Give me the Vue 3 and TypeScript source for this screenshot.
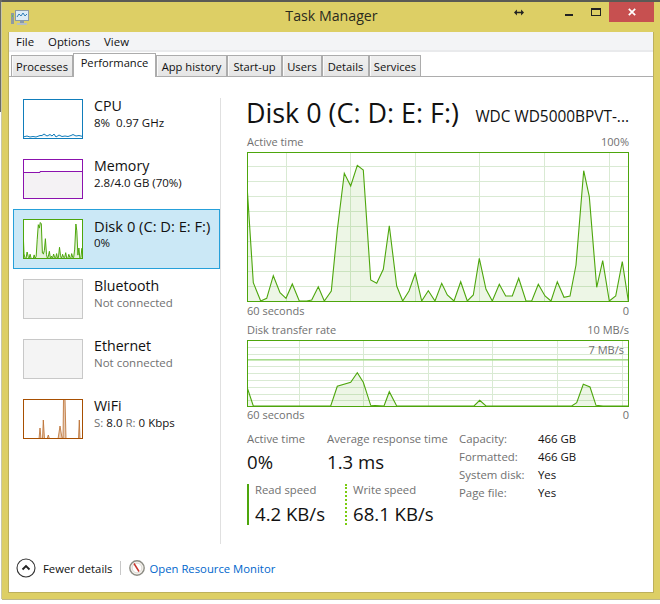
<script setup lang="ts">
type P = [number, number]
const d1: P[] = [[247,185],[253.3,282.7],[260.7,301],[266.7,298.3],[273.3,275.7],[280,292.7],[286,298.3],[292.3,284],[299.3,301],[306.7,301],[311.7,300],[318.3,286.7],[324.3,301],[331.3,291],[337.3,230],[344.3,173.3],[350.7,186],[357.3,165.3],[363.3,170],[370.7,280],[376.7,283.3],[383.3,269.3],[389.3,225.7],[396.7,286],[402.7,301],[409,291],[415.3,273.3],[421.7,301],[428.3,290.7],[435,301],[441.7,283.3],[447.3,295],[454,301],[460.7,281.7],[467.3,301],[473.3,295],[479.3,258.3],[486,289.3],[492.3,301],[499.3,284.3],[505.7,296],[512.3,296],[518.7,278.3],[526,301],[531.7,301],[538.3,284.3],[545,296],[551,301],[557.3,281.7],[564,297.3],[570,296],[576,265],[583.7,170.7],[589.3,196.7],[596.7,287.3],[602.7,260.7],[609.3,301],[615.7,296],[622.3,261.7],[628.3,301]]
const d2: P[] = [[247,386],[253.3,405],[330.7,405],[337.3,385.3],[350.7,381.3],[357.3,371.7],[363.3,381.3],[370.7,404.3],[384,405],[389.3,390.7],[396.7,405],[474,405],[479.7,399.3],[486,405],[571.7,405],[576.7,401.7],[583.3,383.3],[590,386],[596,404.3],[603,405],[628,405]]
const line = (pts: P[], ox: number, oy: number, sx = 1, sy = 1) =>
  pts.map(([x, y]) => `${((x - ox) * sx).toFixed(1)},${((y - oy) * sy).toFixed(1)}`).join(' ')
const area = (pts: P[], ox: number, oy: number, w: number, h: number, sx = 1, sy = 1) =>
  `0,${h} ${line(pts, ox, oy, sx, sy)} ${w},${h}`
const line1 = line(d1, 247, 152)
const area1 = area(d1, 247, 152, 382, 150)
const line2 = line(d2, 247, 339)
const area2 = area(d2, 247, 339, 382, 67)
const diskLine = line(d1, 247, 152, 60 / 382, 40 / 150)
const diskArea = area(d1, 247, 152, 60, 40, 60 / 382, 40 / 150)
const h1 = [14.5, 29.5, 44.5, 59.5, 74.5, 89.5, 104.5, 119.5, 134.5]
const v1 = [39.5, 103.5, 168.5, 232.5, 297.5, 362.5]
const h2 = [7.5, 14.5, 26.5, 33.5, 40.5, 47.5, 54.5, 60.5]
const v2 = [52.5, 116.5, 181.5, 245.5, 310.5, 375.5]
const tabs = [
  { t: 'Processes', w: 62 }, { t: 'Performance', w: 83, on: true }, { t: 'App history', w: 71 },
  { t: 'Start-up', w: 55 }, { t: 'Users', w: 40 }, { t: 'Details', w: 47 }, { t: 'Services', w: 52 }
]
const cpu = '0,38 4,37 7,38 10,37.5 13,38 17,36.5 19,36.5 21,35 24,37 27,35.5 29,37 31,35 33,38 36,36 39,37.5 42,37 45,37.5 48,36.5 50,35.5 53,37 56,36.5 60,37.5'
const wifi = ['16,40 17,29 18,40', '19.5,40 20.3,21 21.5,40', '24,40 25.3,36 26.5,40', '35,40 37,27 38.5,36 39.5,40', '40,40 40.5,0 42,0 43,40', '55.5,40 56.3,21 57,40']
</script>

<template>
  <div class="page">
    <div class="edge-top"></div>
    <div class="edge-left"></div>
    <div class="window">
      <div class="titlebar">
        <svg class="app-icon" width="18" height="16" viewBox="0 0 18 16">
          <rect x="4.5" y="0.5" width="13" height="10" fill="#DCEBF5" stroke="#8A9AA6" />
          <polyline points="6,7 8,4 10,6 12,3 14,6 16,4" fill="none" stroke="#2F7FB8" />
          <rect x="0" y="3" width="3" height="11" fill="#8F9AA0" />
          <rect x="1" y="5" width="1" height="2" fill="#5FC060" />
          <rect x="9" y="11" width="4" height="2" fill="#8A9AA6" />
          <rect x="6" y="13" width="10" height="2" fill="#B4BEC4" />
        </svg>
        <div class="title">Task Manager</div>
        <svg class="cursor" width="10" height="7" viewBox="0 0 12 8">
          <path d="M0 4 L3.5 0.5 V3 H8.5 V0.5 L12 4 L8.5 7.5 V5 H3.5 V7.5 Z" fill="#222" />
        </svg>
        <div class="min"></div>
        <div class="max"></div>
        <div class="close">
          <svg width="8" height="8" viewBox="0 0 8 8">
            <path d="M0.8 0.8 L7.2 7.2 M7.2 0.8 L0.8 7.2" stroke="#fff" stroke-width="1.7" fill="none" />
          </svg>
        </div>
      </div>

      <div class="client">
        <div class="menu">
          <span>File</span><span>Options</span><span>View</span>
        </div>
        <div class="tabs">
          <div v-for="tab in tabs" :key="tab.t" class="tab" :class="{ on: tab.on }" :style="{ width: tab.w + 'px' }">{{ tab.t }}</div>
        </div>

        <div class="body">
          <div class="side">
            <div class="item">
              <svg class="thumb" width="60" height="40" viewBox="0 0 60 40">
                <polyline :points="cpu" fill="#E9F4FA" stroke="#117DBB" />
                <rect x="0.5" y="0.5" width="59" height="39" fill="none" stroke="#117DBB" />
              </svg>
              <div class="meta"><div class="name">CPU</div><div class="sub">8%&nbsp; 0.97 GHz</div></div>
            </div>
            <div class="item">
              <svg class="thumb" width="60" height="40" viewBox="0 0 60 40">
                <path d="M0 13 H17 V12.5 H60 V40 H0 Z" fill="#F4F2F4" />
                <path d="M0 13.5 H17 V12.5 H60" fill="none" stroke="#8B12AE" />
                <rect x="0.5" y="0.5" width="59" height="39" fill="none" stroke="#8B12AE" />
              </svg>
              <div class="meta"><div class="name">Memory</div><div class="sub">2.8/4.0 GB (70%)</div></div>
            </div>
            <div class="item sel">
              <svg class="thumb" width="60" height="40" viewBox="0 0 60 40">
                <rect width="60" height="40" fill="#fff" />
                <polygon :points="diskArea" fill="#E4F1D9" />
                <polyline :points="diskLine" fill="none" stroke="#4DA60C" />
                <rect x="0.5" y="0.5" width="59" height="39" fill="none" stroke="#4DA60C" />
              </svg>
              <div class="meta"><div class="name disk">Disk 0 (C: D: E: F:)</div><div class="sub">0%</div></div>
            </div>
            <div class="item">
              <div class="thumb off"></div>
              <div class="meta"><div class="name">Bluetooth</div><div class="sub gray">Not connected</div></div>
            </div>
            <div class="item">
              <div class="thumb off"></div>
              <div class="meta"><div class="name">Ethernet</div><div class="sub gray">Not connected</div></div>
            </div>
            <div class="item">
              <svg class="thumb" width="60" height="40" viewBox="0 0 60 40">
                <polygon v-for="(p, i) in wifi" :key="i" :points="p" fill="#E8CDB6" stroke="#B96A2A" stroke-width="0.8" />
                <rect x="0.5" y="0.5" width="59" height="39" fill="none" stroke="#A74F01" />
              </svg>
              <div class="meta"><div class="name">WiFi</div><div class="sub"><span class="gray">S:</span> 8.0 <span class="gray">R:</span> 0 Kbps</div></div>
            </div>
          </div>
          <div class="sep"></div>

          <div class="main">
            <div class="head">
              <div class="h-title">Disk 0 (C: D: E: F:)</div>
              <div class="h-model">WDC WD5000BPVT-...</div>
            </div>
            <div class="cap first"><span>Active time</span><span>100%</span></div>
            <svg class="chart" width="382" height="150" viewBox="0 0 382 150">
              <g stroke="#D9EAD3" fill="none">
                <path v-for="y in h1" :key="'a' + y" :d="`M0 ${y} H382`" />
                <path v-for="x in v1" :key="'b' + x" :d="`M${x} 0 V150`" />
              </g>
              <polygon :points="area1" fill="#4DA60C" fill-opacity="0.1" />
              <polyline :points="line1" fill="none" stroke="#4DA60C" stroke-width="1.1" />
              <rect x="0.5" y="0.5" width="381" height="149" fill="none" stroke="#4DA60C" />
            </svg>
            <div class="cap axis"><span>60 seconds</span><span>0</span></div>
            <div class="cap second"><span>Disk transfer rate</span><span>10 MB/s</span></div>
            <div class="chart-wrap">
              <svg class="chart" width="382" height="67" viewBox="0 0 382 67">
                <g stroke="#D9EAD3" fill="none">
                  <path v-for="y in h2" :key="'c' + y" :d="`M0 ${y} H382`" />
                  <path v-for="x in v2" :key="'e' + x" :d="`M${x} 0 V67`" />
                </g>
                <rect x="0" y="19" width="382" height="1.6" fill="#A8DC8E" />
                <polygon :points="area2" fill="#4DA60C" fill-opacity="0.1" />
                <polyline :points="line2" fill="none" stroke="#4DA60C" stroke-width="1.1" />
                <rect x="0.5" y="0.5" width="381" height="66" fill="none" stroke="#4DA60C" />
              </svg>
              <div class="limit">7 MB/s</div>
            </div>
            <div class="cap axis low"><span>60 seconds</span><span>0</span></div>

            <div class="stats">
              <div class="left">
                <div class="row">
                  <div class="st w80"><div class="lab">Active time</div><div class="val">0%</div></div>
                  <div class="st"><div class="lab">Average response time</div><div class="val">1.3 ms</div></div>
                </div>
                <div class="row speeds">
                  <div class="st speed read"><div class="lab">Read speed</div><div class="val">4.2 KB/s</div></div>
                  <div class="st speed write"><div class="lab">Write speed</div><div class="val">68.1 KB/s</div></div>
                </div>
              </div>
              <div class="info">
                <span class="k">Capacity:</span><span>466 GB</span>
                <span class="k">Formatted:</span><span>466 GB</span>
                <span class="k">System disk:</span><span>Yes</span>
                <span class="k">Page file:</span><span>Yes</span>
              </div>
            </div>
          </div>
        </div>

        <div class="footer">
          <svg width="20" height="20" viewBox="0 0 20 20">
            <circle cx="10" cy="10" r="9" fill="#fff" stroke="#333" stroke-width="1.1" />
            <path d="M6.5 11.5 L10 8 L13.5 11.5" fill="none" stroke="#222" stroke-width="1.8" />
          </svg>
          <span class="fewer">Fewer details</span>
          <span class="fsep"></span>
          <svg width="16" height="16" viewBox="0 0 16 16">
            <circle cx="8" cy="8" r="7.2" fill="#F4F1EC" stroke="#8C8C84" stroke-width="1.4" />
            <circle cx="8" cy="8" r="4.8" fill="#fff" stroke="#C9C5BC" stroke-width="0.6" />
            <path d="M5 3.5 L10 11.5" stroke="#C8342B" stroke-width="1.5" />
          </svg>
          <span class="link">Open Resource Monitor</span>
        </div>
      </div>
    </div>
  </div>
</template>

<style>
html, body { margin: 0; background: #fff; }
</style>

<style scoped>
.page {
  position: relative;
  width: 660px;
  height: 604px;
  overflow: hidden;
  background: #fff;
  font-family: "Open Sans", "Noto Sans", sans-serif;
  font-size: 11.4px;
  color: #111;
}
.edge-top { position: absolute; left: 0; top: 0; width: 660px; height: 2px; background: #5A5A55; }
.edge-left { position: absolute; left: 0; top: 0; width: 2px; height: 112px; background: #6A6A66; }
.window {
  position: relative;
  margin: 2px 0 0 2px;
  width: 658px;
  height: 597px;
  background: #DDCF65;
  display: flex;
  flex-direction: column;
  box-shadow: 0 1px 0 #BDB78A, -1px 0 0 #C9C7A8;
}
.titlebar { height: 30px; display: flex; align-items: flex-start; position: relative; flex: none; }
.app-icon { margin: 8px 0 0 9px; }
.title {
  position: absolute;
  left: 0;
  width: 659px;
  top: 4px;
  text-align: center;
  font-size: 14.2px;
  line-height: 20px;
  color: #2A2A1E;
}
.cursor { margin: 7px 0 0 485px; }
.min { width: 8px; height: 2px; background: #222; margin: 12px 0 0 41px; }
.max { width: 10px; height: 8px; box-sizing: border-box; border: 1px solid #222; border-top-width: 2px; margin: 6px 0 0 18px; }
.close {
  width: 45px;
  height: 20px;
  background: #C75050;
  margin-left: 8px;
  display: flex;
  align-items: center;
  justify-content: center;
}
.client {
  flex: 1;
  margin: 0 6px 6px 6px;
  border: 1px solid #BDB05C;
  border-top: 0;
  background: #fff;
  display: flex;
  flex-direction: column;
  min-height: 0;
}
.menu {
  height: 18px;
  line-height: 20px;
  background: #F3F4F6;
  border-bottom: 2px solid #E9EAEC;
  padding-left: 7px;
  display: flex;
  gap: 14px;
  flex: none;
}
.tabs {
  height: 24px;
  padding-left: 2px;
  border-bottom: 1px solid #ADADAD;
  display: flex;
  align-items: flex-end;
  flex: none;
}
.tab {
  box-sizing: border-box;
  height: 21px;
  border: 1px solid #ACACAC;
  border-bottom: 0;
  background: linear-gradient(#F0F0F0, #E5E5E5);
  box-shadow: inset 1px 0 0 #FAFAFA;
  text-align: center;
  line-height: 21px;
  font-size: 11.2px;
  white-space: nowrap;
  overflow: hidden;
}
.tab.on {
  height: 24px;
  margin-bottom: -1px;
  background: #fff;
  line-height: 18px;
  box-shadow: none;
}
.body { flex: 1; display: flex; min-height: 0; }
.side { width: 207px; margin-left: 4px; padding-top: 12px; flex: none; }
.item {
  box-sizing: border-box;
  height: 60px;
  padding: 10px 0 0 10px;
  display: flex;
  gap: 11px;
}
.item.sel { background: #CBE8F6; box-shadow: inset 0 0 0 1px #26A0DA; }
.thumb { flex: none; display: block; background: #fff; }
.thumb.off { width: 60px; height: 40px; box-sizing: border-box; background: #F4F4F4; border: 1px solid #C8C8C8; }
.meta { margin-top: -3px; white-space: nowrap; }
.name { font-size: 14.2px; line-height: 20px; }
.name.disk { font-size: 14.7px; }
.sub { font-size: 11.5px; line-height: 16px; margin-top: -1px; }
.gray { color: #707070; }
.sep { width: 1px; margin-top: 21px; background: #E0E0E0; flex: none; }
.main { width: 382px; margin-left: 26px; flex: none; }
.head { display: flex; justify-content: space-between; align-items: flex-start; height: 36px; margin: 18px 0 3px -1px; white-space: nowrap; }
.h-title { font-size: 26.9px; line-height: 36px; color: #111; }
.h-model { font-size: 15.4px; line-height: 20px; margin-top: 12px; }
.cap {
  display: flex;
  justify-content: space-between;
  height: 15px;
  line-height: 15px;
  color: #707070;
  font-size: 11px;
  margin-bottom: 2px;
}
.first { margin-bottom: 3px; }
.axis { margin: 1px 0 0; }
.second { margin-top: 4px; margin-bottom: 3px; }
.low { margin-top: 0; }
.chart { display: block; }
.chart-wrap { position: relative; }
.limit { position: absolute; right: 5px; top: 2px; font-size: 11px; line-height: 15px; color: #707070; }
.stats { display: flex; margin-top: 8px; }
.left { width: 212px; flex: none; }
.row { display: flex; }
.st { white-space: nowrap; }
.w80 { width: 80px; }
.lab { color: #707070; line-height: 18px; font-size: 11.3px; }
.val { font-size: 18.6px; line-height: 27px; margin-top: 0; }
.speeds { margin-top: 9px; }
.speed { padding-left: 6px; height: 41px; }
.speed .lab { margin-top: -3px; }
.speed .val { margin-top: 1px; }
.read { width: 90px; border-left: 2px solid #4DA60C; }
.write { border-left: 2px dotted #7ACB12; }
.info {
  display: grid;
  grid-template-columns: 79px auto;
  grid-auto-rows: 18px;
  line-height: 18px;
  align-content: start;
  white-space: nowrap;
}
.k { color: #707070; }
.footer {
  height: 48px;
  margin-top: auto;
  padding-left: 7px;
  display: flex;
  align-items: center;
  flex: none;
  font-size: 11.3px;
}
.fewer { margin-left: 7px; }
.fsep { width: 1px; height: 14px; background: #C8C8C8; margin: 0 8px; }
.link { color: #0066CC; margin-left: 4px; }
</style>
